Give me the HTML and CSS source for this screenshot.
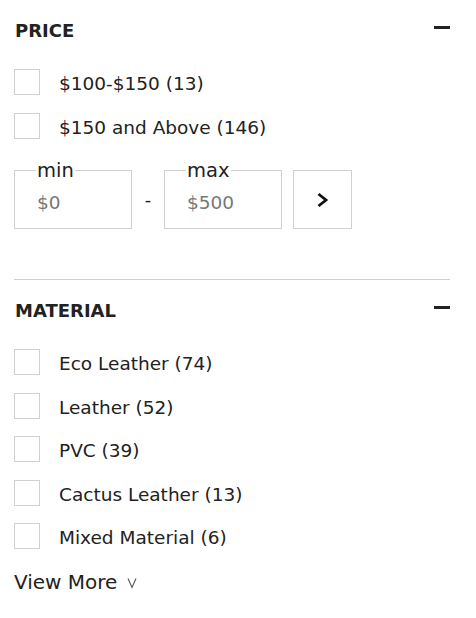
FILE: index.html
```html
<!DOCTYPE html>
<html lang="en">
<head>
<meta charset="utf-8">
<title>Filters</title>
<link rel="stylesheet" href="styles.css">
</head>
<body>
<div class="filters">
  <section class="filter">
    <div class="filter-head">
      <h3 class="filter-title">PRICE</h3>
      <span class="minus"></span>
    </div>
    <ul class="options options-price">
      <li class="option"><span class="box"></span><span class="label">$100-$150 (13)</span></li>
      <li class="option"><span class="box"></span><span class="label">$150 and Above (146)</span></li>
    </ul>
    <div class="range">
      <div class="field">
        <span class="field-label">min</span>
        <span class="field-value">$0</span>
      </div>
      <span class="dash">-</span>
      <div class="field">
        <span class="field-label">max</span>
        <span class="field-value">$500</span>
      </div>
      <button class="go" type="button" aria-label="Apply">
        <svg width="13" height="16" viewBox="0 0 13 16"><path d="M2.5 2 L10 8 L2.5 14" fill="none" stroke="#111" stroke-width="2.8"/></svg>
      </button>
    </div>
  </section>
  <div class="divider"></div>
  <section class="filter">
    <div class="filter-head">
      <h3 class="filter-title">MATERIAL</h3>
      <span class="minus"></span>
    </div>
    <ul class="options options-material">
      <li class="option"><span class="box"></span><span class="label">Eco Leather (74)</span></li>
      <li class="option"><span class="box"></span><span class="label">Leather (52)</span></li>
      <li class="option"><span class="box"></span><span class="label">PVC (39)</span></li>
      <li class="option"><span class="box"></span><span class="label">Cactus Leather (13)</span></li>
      <li class="option"><span class="box"></span><span class="label">Mixed Material (6)</span></li>
    </ul>
    <div class="more"><span>View More</span><svg class="caret" width="10" height="12" viewBox="0 0 10 12"><path d="M1 1.5 L5 10.5 L9 1.5" fill="none" stroke="#555" stroke-width="1.1"/></svg></div>
  </section>
</div>
</body>
</html>
```
FILE: styles.css
```css
* { box-sizing: border-box; }
html, body { margin: 0; padding: 0; background: #fff; }
body {
  font-family: "DejaVu Sans", Verdana, sans-serif;
  color: #222;
  width: 476px;
}
.filters { padding: 0 26px 0 14px; }
.filter-head {
  height: 60px;
  display: flex;
  align-items: flex-start;
  justify-content: space-between;
}
.filter-title {
  margin: 21px 0 0 1px;
  font-size: 18px;
  font-weight: 700;
  line-height: 20px;
  color: #222;
}
.minus {
  width: 16px;
  height: 3px;
  margin-top: 26px;
  background: #222;
}
.options {
  list-style: none;
  margin: 9px 0 0 0;
  padding: 0;
  display: flex;
  flex-direction: column;
}
.options-price { gap: 18px; }
.options-material { gap: 17.5px; }
.option {
  display: flex;
  align-items: center;
  height: 26px;
}
.box {
  width: 26px;
  height: 26px;
  border: 1px solid #d0d0d0;
  flex: none;
}
.label {
  margin-left: 19px;
  padding-top: 4px;
  font-size: 18.5px;
  line-height: 26px;
  color: #222;
}
.range {
  display: flex;
  align-items: center;
  margin-top: 31px;
  height: 59px;
}
.field {
  width: 118px;
  height: 59px;
  border: 1px solid #d0d0d0;
  display: flex;
  flex-direction: column;
  padding-left: 21px;
}
.field-label {
  align-self: flex-start;
  font-size: 19.5px;
  line-height: 20px;
  margin-top: -10px;
  padding: 0 1px;
  background: #fff;
  color: #222;
}
.field-value {
  font-size: 18.5px;
  line-height: 20px;
  margin-top: 12px;
  margin-left: 1px;
  color: #777;
}
.dash {
  width: 32px;
  text-align: center;
  font-size: 18px;
  color: #222;
}
.go {
  margin-left: 11px;
  width: 59px;
  height: 59px;
  border: 1px solid #d0d0d0;
  background: #fff;
  padding: 0;
  display: flex;
  align-items: center;
  justify-content: center;
}
.divider {
  margin: 50px 0 0 0;
  height: 1px;
  background: #d0d0d0;
}
.more {
  display: flex;
  align-items: center;
  margin-top: 19px;
  height: 26px;
  padding-top: 2px;
  font-size: 20px;
  line-height: 26px;
  color: #222;
}
.caret {
  margin-left: 10px;
  margin-top: 1px;
}
```
